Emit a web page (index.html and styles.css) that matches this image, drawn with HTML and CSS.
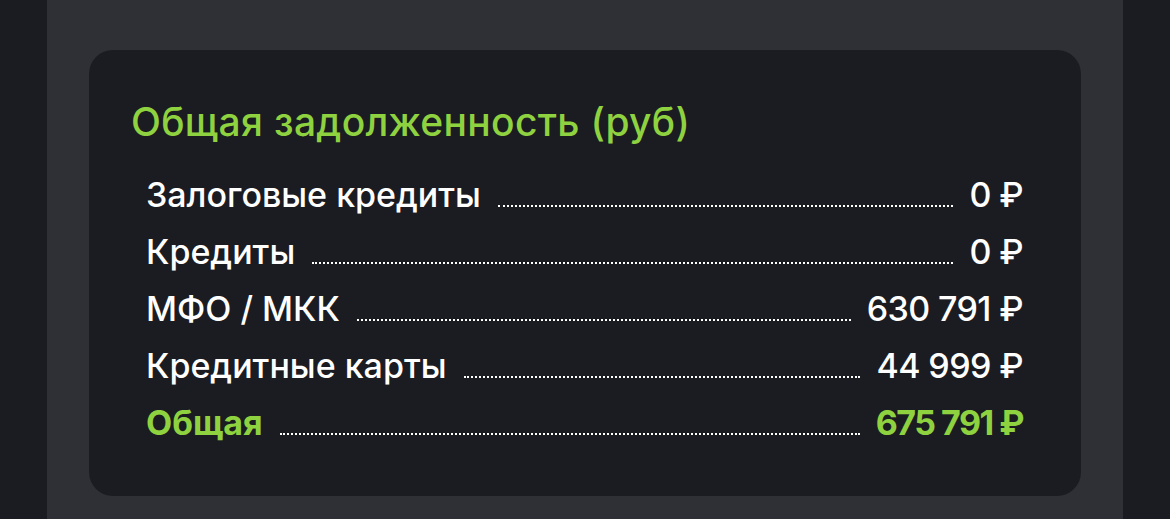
FILE: index.html
```html
<!DOCTYPE html>
<html lang="ru">
<head>
<meta charset="utf-8">
<link rel="stylesheet" href="styles.css">
</head>
<body>
<div class="page">
  <div class="column">
    <section class="card">
      <h2 class="title">Общая задолженность (руб)</h2>
      <ul class="list">
        <li class="row"><span class="label">Залоговые кредиты</span><span class="dots"></span><span class="value">0 ₽</span></li>
        <li class="row"><span class="label">Кредиты</span><span class="dots"></span><span class="value">0 ₽</span></li>
        <li class="row"><span class="label">МФО / МКК</span><span class="dots"></span><span class="value">630 791 ₽</span></li>
        <li class="row"><span class="label">Кредитные карты</span><span class="dots"></span><span class="value">44 999 ₽</span></li>
        <li class="row total"><span class="label">Общая</span><span class="dots"></span><span class="value">675 791 ₽</span></li>
      </ul>
    </section>
  </div>
</div>
</body>
</html>
```
FILE: styles.css
```css
html, body {
  margin: 0;
  padding: 0;
  background: #1b1b22;
  height: 100%;
}
.page {
  height: 519px;
  display: flex;
  padding-left: 47px;
  padding-right: 47px;
  box-sizing: border-box;
}
.column {
  flex: 1;
  background: #2f3036;
  padding: 50px 42px 23px 42px;
  box-sizing: border-box;
  display: flex;
  flex-direction: column;
}
.card {
  background: #1b1c22;
  border-radius: 24px;
  height: 446px;
  box-sizing: border-box;
  padding: 52px 58px 0 42px;
  font-family: Inter, "Noto Sans", sans-serif;
  color: #ffffff;
}
.title {
  margin: 0;
  font-size: 39px;
  font-weight: 500;
  color: #8fd240;
  line-height: 1;
  letter-spacing: 0.3px;
}
.list {
  list-style: none;
  margin: 37px 0 0 0;
  padding: 0 0 0 15px;
}
.row {
  display: flex;
  align-items: baseline;
  height: 57px;
  font-size: 34px;
  font-weight: 500;
  line-height: 1;
}
.label {
  white-space: nowrap;
}
.dots {
  flex: 1;
  margin: 0 16px 0 17px;
  border-bottom: 2px dotted #ffffff;
  height: 0;
}
.value {
  white-space: nowrap;
  letter-spacing: -0.6px;
}
.total {
  color: #8fd240;
  font-weight: 700;
}
.total .value {
  letter-spacing: -1.5px;
}
```
